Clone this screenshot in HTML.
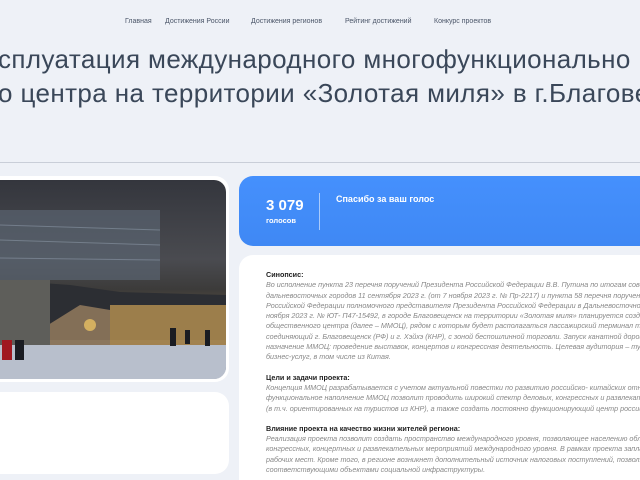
<!DOCTYPE html>
<html><head><meta charset="utf-8"><style>
*{margin:0;padding:0;box-sizing:border-box}
html,body{width:640px;height:480px;overflow:hidden}
body{background:#eef1f7;font-family:"Liberation Sans",sans-serif;position:relative}
.wrap{position:absolute;left:0;top:0;width:640px;height:480px;overflow:hidden}
.nav{position:absolute;top:18px;left:0;width:640px;font-size:7px;color:#4a5568}
.nav span{position:absolute;white-space:nowrap}
.t{position:absolute;white-space:nowrap;font-size:26px;color:#3a4759;letter-spacing:0.4px}
.hr{position:absolute;top:162px;left:0;width:640px;height:1px;background:#c9ced8}
.imgcard{position:absolute;left:-20px;top:176px;width:249px;height:206px;background:#fff;border-radius:14px}
.img{position:absolute;left:-20px;top:180px;width:246px;height:199px;border-radius:12px;overflow:hidden;background:linear-gradient(#34363d 0%,#4a4b50 40%,#3c3b3a 55%,#6a5a40 70%,#4a4c55 85%,#9aa0ae 100%)}
.card2{position:absolute;left:-20px;top:392px;width:249px;height:82px;background:#fff;border-radius:14px}
.blue{position:absolute;left:239px;top:176px;width:420px;height:70px;background:linear-gradient(#4590fd,#3f88f4);border-radius:14px;color:#fff}
.white{position:absolute;left:239px;top:255px;width:420px;height:240px;background:#fff;border-radius:14px}
.txt{position:absolute;left:266px;top:270px;width:374px;overflow:hidden;font-size:7.2px;line-height:10.3px;white-space:nowrap;color:#888}
.txt b{color:#222;font-style:normal;display:block}
.txt i{display:block}
.gap{height:10px}
</style></head><body><div class="wrap">
<div class="nav">
<span style="left:125px">Главная</span>
<span style="left:165px">Достижения России</span>
<span style="left:251px">Достижения регионов</span>
<span style="left:345px">Рейтинг достижений</span>
<span style="left:434px">Конкурс проектов</span>
</div>
<div class="t" style="left:-2px;top:44px">сплуатация международного многофункционально</div>
<div class="t" style="left:-2px;top:78px">о центра на территории «Золотая миля» в г.Благове</div>
<div class="hr"></div>
<div class="imgcard"></div>
<div class="img">
<svg width="246" height="199" viewBox="0 0 246 199">
<rect x="20" y="30" width="160" height="70" fill="#5a6470" opacity="0.7"/>
<g stroke="#8a96a5" stroke-width="1" opacity="0.6"><line x1="20" y1="45" x2="180" y2="50"/><line x1="20" y1="60" x2="180" y2="65"/><line x1="20" y1="78" x2="180" y2="80"/></g>
<path d="M20 100 L90 105 L140 112 L246 115 L246 160 L20 160Z" fill="#2c2e33"/>
<rect x="130" y="125" width="116" height="45" fill="#b08c50" opacity="0.85"/>
<path d="M60 150 L100 125 L130 130 L130 165 L60 165Z" fill="#9a8060" opacity="0.8"/>
<rect x="20" y="100" width="50" height="65" fill="#5e5e5a"/>
<circle cx="110" cy="145" r="6" fill="#d4b060"/>
<rect x="20" y="165" width="226" height="34" fill="#b8bfcc"/>
<g fill="#1a1c22"><rect x="22" y="160" width="10" height="20" fill="#a01820"/><rect x="35" y="160" width="9" height="20"/><rect x="190" y="148" width="6" height="18"/><rect x="205" y="150" width="5" height="14"/><rect x="225" y="150" width="5" height="16"/></g>
</svg>
</div>
<div class="card2"></div>
<div class="blue">
<div style="position:absolute;left:27px;top:21px;font-size:15px;font-weight:bold">3 079</div>
<div style="position:absolute;left:27px;top:40px;font-size:7.5px;font-weight:bold">голосов</div>
<div style="position:absolute;left:80px;top:17px;width:1px;height:37px;background:rgba(255,255,255,.55)"></div>
<div style="position:absolute;left:97px;top:18px;font-size:9px;font-weight:bold">Спасибо за ваш голос</div>
</div>
<div class="white"></div>
<div class="txt">
<b>Синопсис:</b>
<i>Во исполнение пункта 23 перечня поручений Президента Российской Федерации В.В. Путина по итогам совещания</i>
<i>дальневосточных городов 11 сентября 2023 г. (от 7 ноября 2023 г. № Пр-2217) и пункта 58 перечня поручений</i>
<i>Российской Федерации полномочного представителя Президента Российской Федерации в Дальневосточном</i>
<i>ноября 2023 г. № ЮТ- П47-15492, в городе Благовещенск на территории «Золотая миля» планируется создание</i>
<i>общественного центра (далее – ММОЦ), рядом с которым будет располагаться пассажирский терминал трассы</i>
<i>соединяющий г. Благовещенск (РФ) и г. Хэйхэ (КНР), с зоной беспошлинной торговли. Запуск канатной дороги</i>
<i>назначение ММОЦ: проведение выставок, концертов и конгрессная деятельность. Целевая аудитория – туристы</i>
<i>бизнес-услуг, в том числе из Китая.</i>
<div class="gap"></div>
<b>Цели и задачи проекта:</b>
<i>Концепция ММОЦ разрабатывается с учетом актуальной повестки по развитию российско- китайских отношений</i>
<i>функциональное наполнение ММОЦ позволит проводить широкий спектр деловых, конгрессных и развлекательных</i>
<i>(в т.ч. ориентированных на туристов из КНР), а также создать постоянно функционирующий центр российской</i>
<div class="gap"></div>
<b>Влияние проекта на качество жизни жителей региона:</b>
<i>Реализация проекта позволит создать пространство международного уровня, позволяющее населению области</i>
<i>конгрессных, концертных и развлекательных мероприятий международного уровня. В рамках проекта запланировано</i>
<i>рабочих мест. Кроме того, в регионе возникнет дополнительный источник налоговых поступлений, позволяющий</i>
<i>соответствующими объектами социальной инфраструктуры.</i>
</div>
</div></body></html>
